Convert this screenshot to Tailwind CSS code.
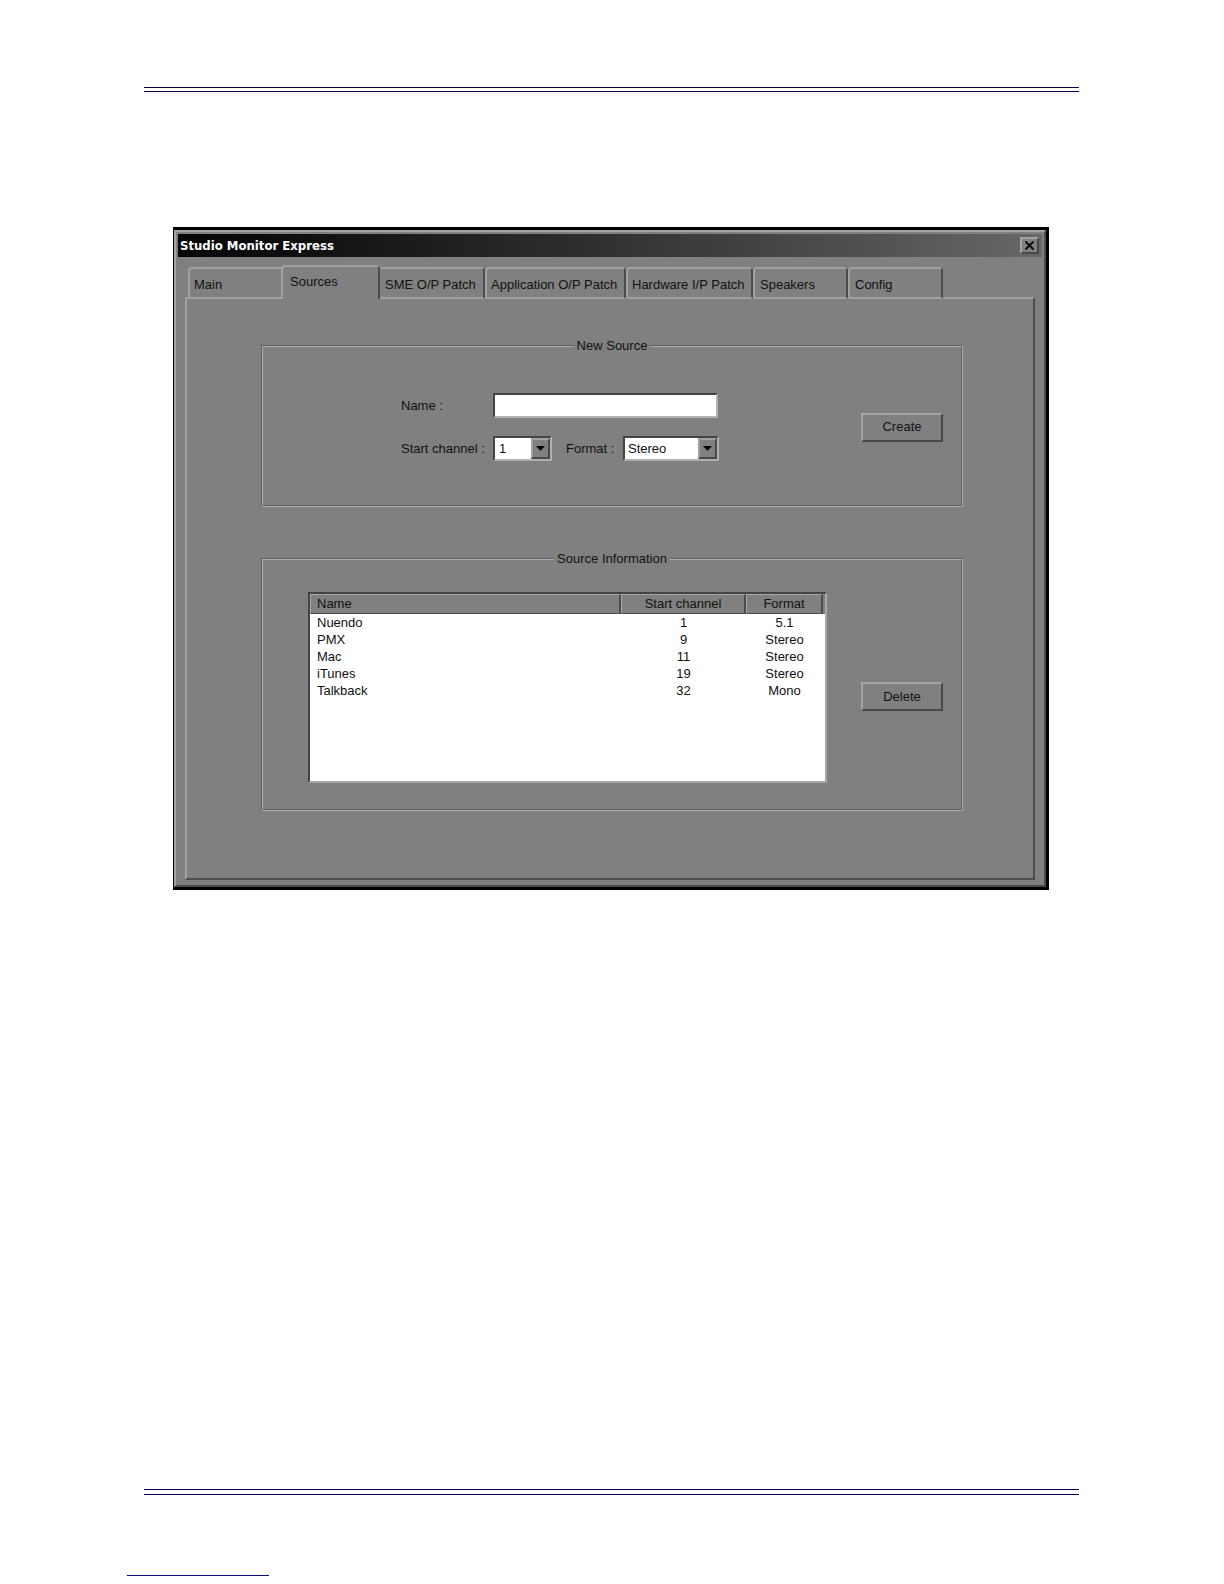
<!DOCTYPE html>
<html lang="en">
<head>
    <meta charset="UTF-8">
    <meta name="viewport" content="width=device-width, initial-scale=1.0">
    <title>Studio Monitor Express</title>
    <script src="https://cdn.jsdelivr.net/npm/@tailwindcss/browser@4"></script>
</head>
<body class="bg-white min-h-screen flex flex-col font-['Liberation_Sans',Arial,sans-serif] text-[13px] leading-4 text-[#111]">
    <!-- Page header rule -->
    <header class="mt-[87px] ml-36 mr-[145px] h-[5px] border-y border-[#0a0050]"></header>

    <main class="flex-1 pt-[135px] pl-[173px] pr-[175px]">
        <!-- Dialog window -->
        <section class="bg-[#808080] border-black border-t-[3px] border-l border-r-[3px] border-b-[3px]">
            <div class="border-2 border-t-[#a4a4a4] border-l-[#a4a4a4] border-r-[#4c4c4c] border-b-[#4c4c4c] pt-0.5 pl-0.5 pr-0.5 pb-[5px]">
                <div class="h-[23px] flex items-center justify-between pl-0.5 pr-[3px] bg-linear-to-r from-[#050505] to-[#686868]">
                    <h1 class="font-['DejaVu_Sans_Condensed','DejaVu_Sans',sans-serif] font-bold text-[13px] text-white">Studio Monitor Express</h1>
                    <button type="button" aria-label="Close" class="w-[19px] h-[17px] flex items-center justify-center bg-[#808080] border-2 border-t-[#a4a4a4] border-l-[#a4a4a4] border-r-[#484848] border-b-[#484848]">
                        <svg class="w-[11px] h-[9px]" viewBox="0 0 11 9" fill="none" stroke="#000" stroke-width="1.8"><path d="M1.5 0.5L9.5 8.5M9.5 0.5L1.5 8.5"/></svg>
                    </button>
                </div>

                <div class="pt-2 pl-[7px] pr-[7px]">
                    <!-- Tabs -->
                    <nav role="tablist" class="relative z-10 flex items-end pl-[3px] -mb-0.5 text-left">
                        <button type="button" role="tab" class="w-[93px] h-8 pl-1 pt-[3px] text-left border-2 border-r-0 border-[#a0a0a0] rounded-tl">Main</button>
                        <button type="button" role="tab" aria-selected="true" class="w-[99px] h-[34px] pl-[7px] pb-0.5 text-left bg-[#808080] border-2 border-b-0 border-t-[#a0a0a0] border-l-[#a0a0a0] border-r-[#4c4c4c] rounded-t">Sources</button>
                        <button type="button" role="tab" class="w-[105px] h-8 pl-[5px] pt-[3px] text-left whitespace-nowrap border-2 border-l-0 border-t-[#a0a0a0] border-b-[#a0a0a0] border-r-[#4c4c4c] rounded-tr">SME O/P Patch</button>
                        <button type="button" role="tab" class="w-[141px] h-8 pl-1 pt-[3px] text-left whitespace-nowrap border-2 border-t-[#a0a0a0] border-l-[#a0a0a0] border-b-[#a0a0a0] border-r-[#4c4c4c] rounded-t">Application O/P Patch</button>
                        <button type="button" role="tab" class="w-[127px] h-8 pl-1 pt-[3px] text-left whitespace-nowrap border-2 border-t-[#a0a0a0] border-l-[#a0a0a0] border-b-[#a0a0a0] border-r-[#4c4c4c] rounded-t">Hardware I/P Patch</button>
                        <button type="button" role="tab" class="w-[95px] h-8 pl-[5px] pt-[3px] text-left border-2 border-t-[#a0a0a0] border-l-[#a0a0a0] border-b-[#a0a0a0] border-r-[#4c4c4c] rounded-t">Speakers</button>
                        <button type="button" role="tab" class="w-[95px] h-8 pl-[5px] pt-[3px] text-left border-2 border-t-[#a0a0a0] border-l-[#a0a0a0] border-b-[#a0a0a0] border-r-[#4c4c4c] rounded-t">Config</button>
                    </nav>

                    <div role="tabpanel" class="border-2 border-t-[#a0a0a0] border-l-[#a0a0a0] border-r-[#4c4c4c] border-b-[#4c4c4c] pt-[37px] pb-[67px] pl-[74px] pr-[70px] flex flex-col gap-[42px]">
                        <!-- New source -->
                        <fieldset class="border-2 [border-style:groove] border-[#b0b0b0]">
                            <legend class="mx-auto px-[3px] leading-5">New Source</legend>
                            <form class="flex justify-between pt-[37px] pb-11 pl-[138px] pr-[18px]">
                                <div class="flex flex-col gap-[18px]">
                                    <div class="flex items-center">
                                        <label for="name" class="w-[92px]">Name :</label>
                                        <input id="name" type="text" class="w-[225px] h-[25px] px-1 bg-white border-2 border-t-[#444] border-l-[#444] border-r-[#b0b0b0] border-b-[#b0b0b0]">
                                    </div>
                                    <div class="flex items-center">
                                        <label for="channel" class="w-[92px]">Start channel :</label>
                                        <div class="relative">
                                            <select id="channel" class="appearance-none block w-[59px] h-[25px] pl-1 bg-white border-2 border-t-[#444] border-l-[#444] border-r-[#b0b0b0] border-b-[#b0b0b0]">
                                                <option>1</option>
                                            </select>
                                            <span class="absolute right-0.5 top-0.5 w-[19px] h-[21px] flex items-center justify-center pointer-events-none bg-[#808080] border-2 border-t-[#a0a0a0] border-l-[#a0a0a0] border-r-[#484848] border-b-[#484848]">
                                                <svg class="w-[9px] h-[5px] shrink-0" viewBox="0 0 9 5"><path d="M0 0h9L4.5 5z"/></svg>
                                            </span>
                                        </div>
                                        <label for="format" class="w-[57px] ml-3.5">Format :</label>
                                        <div class="relative">
                                            <select id="format" class="appearance-none block w-24 h-[25px] pl-[3px] bg-white border-2 border-t-[#444] border-l-[#444] border-r-[#b0b0b0] border-b-[#b0b0b0]">
                                                <option>Stereo</option>
                                                <option>Mono</option>
                                                <option>5.1</option>
                                            </select>
                                            <span class="absolute right-0.5 top-0.5 w-[19px] h-[21px] flex items-center justify-center pointer-events-none bg-[#808080] border-2 border-t-[#a0a0a0] border-l-[#a0a0a0] border-r-[#484848] border-b-[#484848]">
                                                <svg class="w-[9px] h-[5px] shrink-0" viewBox="0 0 9 5"><path d="M0 0h9L4.5 5z"/></svg>
                                            </span>
                                        </div>
                                    </div>
                                </div>
                                <button type="button" class="self-center w-[82px] h-[29px] border-2 border-t-[#a4a4a4] border-l-[#a4a4a4] border-r-[#484848] border-b-[#484848]">Create</button>
                            </form>
                        </fieldset>

                        <!-- Source list -->
                        <fieldset class="border-2 [border-style:groove] border-[#b0b0b0]">
                            <legend class="mx-auto px-[3px] leading-5">Source Information</legend>
                            <div class="flex items-start gap-[34px] pt-[23px] pb-[25px] pl-[45px] pr-[18px]">
                                <div class="flex-1 h-[191px] mb-px bg-white border-2 border-t-[#444] border-l-[#444] border-r-[#a8a8a8] border-b-[#a8a8a8]">
                                    <table class="w-full table-fixed border-separate border-spacing-0">
                                        <thead class="bg-[#808080]">
                                            <tr class="h-5">
                                                <th class="p-0 pl-1.5 font-normal text-left border-t border-l border-t-[#a8a8a8] border-l-[#a8a8a8] border-r-2 border-b border-r-[#4c4c4c] border-b-[#4c4c4c]">Name</th>
                                                <th class="w-[125px] p-0 font-normal border-t border-l border-t-[#a8a8a8] border-l-[#a8a8a8] border-r-2 border-b border-r-[#4c4c4c] border-b-[#4c4c4c]">Start channel</th>
                                                <th class="w-[77px] p-0 font-normal border-t border-l border-t-[#a8a8a8] border-l-[#a8a8a8] border-r-2 border-b border-r-[#4c4c4c] border-b-[#4c4c4c]">Format</th>
                                                <td class="w-0.5 p-0"></td>
                                            </tr>
                                        </thead>
                                        <tbody class="text-center leading-[17px]">
                                            <tr><td class="p-0 pl-[7px] text-left">Nuendo</td><td class="p-0">1</td><td class="p-0">5.1</td></tr>
                                            <tr><td class="p-0 pl-[7px] text-left">PMX</td><td class="p-0">9</td><td class="p-0">Stereo</td></tr>
                                            <tr><td class="p-0 pl-[7px] text-left">Mac</td><td class="p-0">11</td><td class="p-0">Stereo</td></tr>
                                            <tr><td class="p-0 pl-[7px] text-left">iTunes</td><td class="p-0">19</td><td class="p-0">Stereo</td></tr>
                                            <tr><td class="p-0 pl-[7px] text-left">Talkback</td><td class="p-0">32</td><td class="p-0">Mono</td></tr>
                                        </tbody>
                                    </table>
                                </div>
                                <button type="button" class="mt-[90px] w-[82px] h-[29px] border-2 border-t-[#a4a4a4] border-l-[#a4a4a4] border-r-[#484848] border-b-[#484848]">Delete</button>
                            </div>
                        </fieldset>
                    </div>
                </div>
            </div>
        </section>
    </main>

    <!-- Page footer rules -->
    <footer class="pb-2">
        <div class="ml-36 mr-[145px] h-1.5 border-y border-[#0a0050]"></div>
        <div class="mt-20 ml-[127px] w-[142px] border-t border-[#0a0a80]"></div>
    </footer>
</body>
</html>
